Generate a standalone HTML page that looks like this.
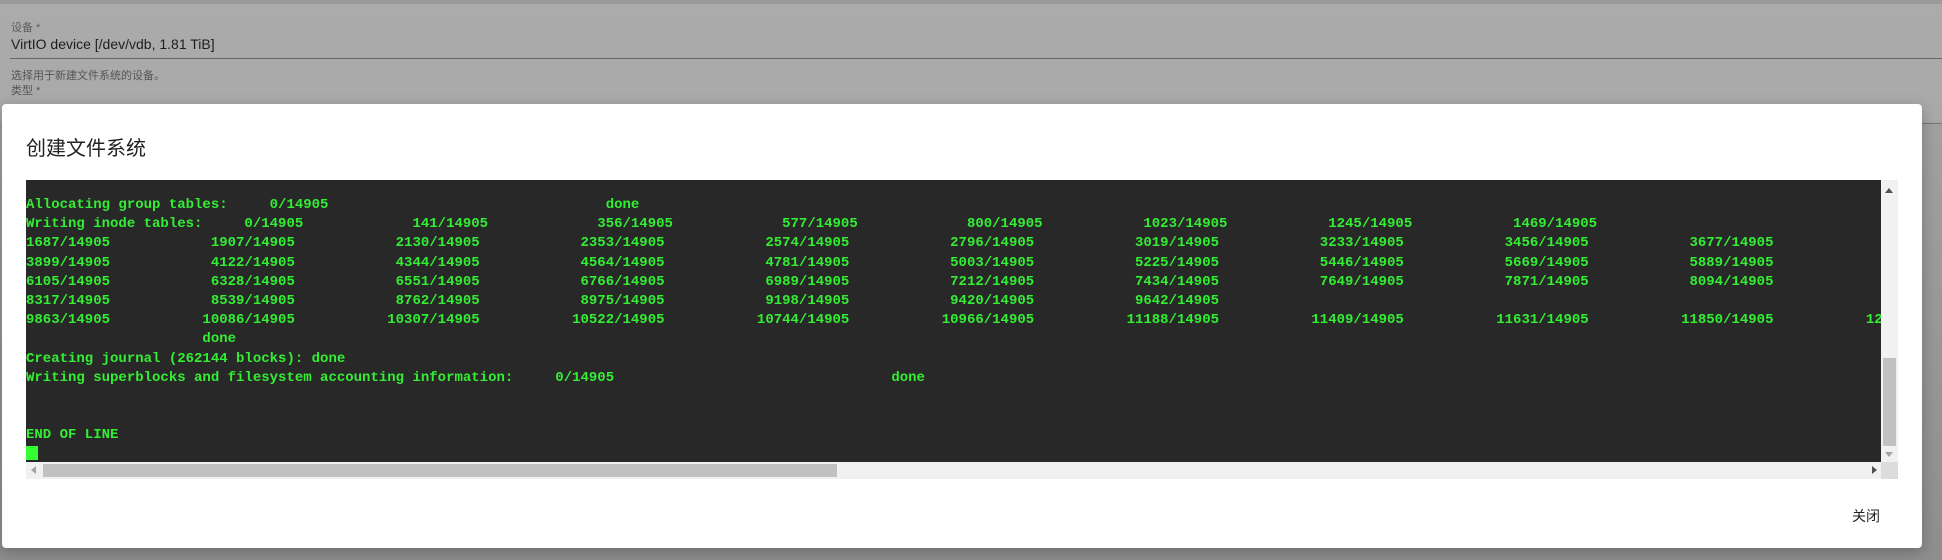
<!DOCTYPE html>
<html><head><meta charset="utf-8"><style>
*{margin:0;padding:0;box-sizing:border-box}
html,body{width:1942px;height:560px;overflow:hidden}
body{background:linear-gradient(#ababab 0,#a9a9a9 120px,#a0a0a0 124px,#8e8e8e 560px);position:relative;font-family:"Liberation Sans","Noto Sans CJK SC",sans-serif}
.topbar{position:absolute;left:0;top:0;width:1942px;height:4px;background:#9a9a9a}
.t{position:absolute;white-space:nowrap}
.modal{position:absolute;left:2px;top:104px;width:1920px;height:444px;background:#fff;border-radius:4px;box-shadow:0 4px 14px rgba(0,0,0,.25)}
.term{position:absolute;left:24px;top:76px;width:1855px;height:282px;background:#282828;overflow:hidden}
pre{position:absolute;left:0;top:16px;font-family:"Liberation Mono",monospace;font-size:14px;line-height:19.2px;color:#33ee33;font-weight:bold;letter-spacing:0}
.vs{position:absolute;left:1879px;top:76px;width:17px;height:282px;background:#f1f1f1}
.hs{position:absolute;left:24px;top:358px;width:1855px;height:17px;background:#f1f1f1}
.corner{position:absolute;left:1879px;top:358px;width:17px;height:17px;background:#dcdcdc}
</style></head><body>
<div class="topbar"></div>
<div class="t" style="left:11px;top:19px;font-size:11px;color:#5e5e5e">设备 *</div>
<div class="t" style="left:11px;top:36px;font-size:14px;color:#1e1e1e">VirtIO device [/dev/vdb, 1.81 TiB]</div>
<div style="position:absolute;left:10px;top:58px;width:1932px;height:1px;background:#666"></div>
<div class="t" style="left:11px;top:67px;font-size:11px;color:#555">选择用于新建文件系统的设备。</div>
<div class="t" style="left:11px;top:82px;font-size:11px;color:#555">类型 *</div>
<div style="position:absolute;left:1922px;top:123px;width:20px;height:1px;background:#777"></div>
<div class="modal">
 <div class="t" style="left:24px;top:28px;font-size:20px;color:#222">创建文件系统</div>
 <div class="term"><pre>Allocating group tables:     0/14905                                 done
Writing inode tables:     0/14905             141/14905             356/14905             577/14905             800/14905            1023/14905            1245/14905            1469/14905
1687/14905            1907/14905            2130/14905            2353/14905            2574/14905            2796/14905            3019/14905            3233/14905            3456/14905            3677/14905
3899/14905            4122/14905            4344/14905            4564/14905            4781/14905            5003/14905            5225/14905            5446/14905            5669/14905            5889/14905
6105/14905            6328/14905            6551/14905            6766/14905            6989/14905            7212/14905            7434/14905            7649/14905            7871/14905            8094/14905
8317/14905            8539/14905            8762/14905            8975/14905            9198/14905            9420/14905            9642/14905
9863/14905           10086/14905           10307/14905           10522/14905           10744/14905           10966/14905           11188/14905           11409/14905           11631/14905           11850/14905           12069/14905
                     done
Creating journal (262144 blocks): done
Writing superblocks and filesystem accounting information:     0/14905                                 done


END OF LINE</pre>
 <div style="position:absolute;left:0;top:266px;width:12px;height:14px;background:#33ff33"></div>
 </div>
 <div class="vs">
  <div style="position:absolute;left:4px;top:8px;width:0;height:0;border-left:4px solid transparent;border-right:4px solid transparent;border-bottom:5px solid #505050"></div>
  <div style="position:absolute;left:2px;top:178px;width:13px;height:88px;background:#c1c1c1"></div>
  <div style="position:absolute;left:4px;top:272px;width:0;height:0;border-left:4px solid transparent;border-right:4px solid transparent;border-top:5px solid #a3a3a3"></div>
 </div>
 <div class="hs">
  <div style="position:absolute;left:5px;top:4px;width:0;height:0;border-top:4px solid transparent;border-bottom:4px solid transparent;border-right:5px solid #a3a3a3"></div>
  <div style="position:absolute;left:17px;top:2px;width:794px;height:13px;background:#c1c1c1"></div>
  <div style="position:absolute;left:1846px;top:4px;width:0;height:0;border-top:4px solid transparent;border-bottom:4px solid transparent;border-left:5px solid #505050"></div>
 </div>
 <div class="corner"></div>
 <div class="t" style="left:1850px;top:402px;font-size:14px;color:#222">关闭</div>
</div>
</body></html>
